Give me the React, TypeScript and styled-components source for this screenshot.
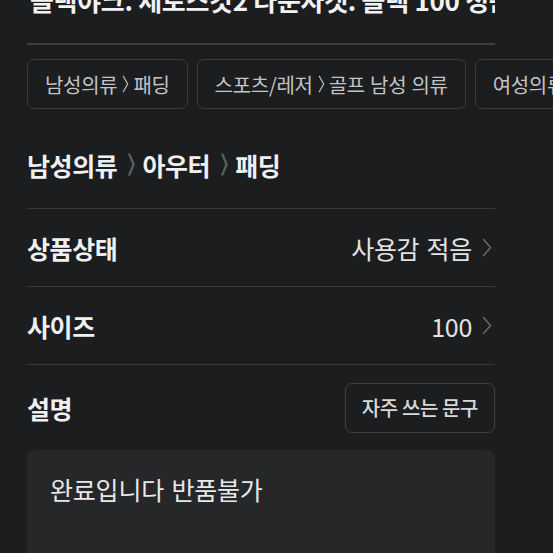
import styled, { createGlobalStyle } from "styled-components";

const GlobalStyle = createGlobalStyle`
  html, body {
    margin: 0;
    padding: 0;
    background: #1c1d1f;
  }
  * {
    box-sizing: border-box;
  }
`;

const chips = ["남성의류 〉패딩", "스포츠/레저 〉골프 남성 의류", "여성의류 〉패딩"];

const Chevron = ({ w, h, color, stroke }: { w: number; h: number; color: string; stroke: number }) => (
  <svg width={w} height={h} viewBox={`0 0 ${w} ${h}`} fill="none">
    <path
      d={`M${stroke} ${stroke} L${w - stroke} ${h / 2} L${stroke} ${h - stroke}`}
      stroke={color}
      strokeWidth={stroke}
      strokeLinecap="round"
      strokeLinejoin="round"
    />
  </svg>
);

const App = () => {
  return (
    <Page>
      <GlobalStyle />
      <Content>
        <TitleBlock>
          <Title>블랙야크. 세로스킷2 다운자켓. 블랙 100 정품</Title>
        </TitleBlock>
        <ChipRow>
          {chips.map((c) => {
            const [a, b] = c.split(" 〉");
            return (
              <Chip key={c}>
                {a}
                <ChipSep>
                  <Chevron w={7} h={18} color="#b9b9bb" stroke={1.3} />
                </ChipSep>
                {b}
              </Chip>
            );
          })}
        </ChipRow>
        <Breadcrumb>
          남성의류
          <CrumbSep>
            <Chevron w={9} h={25} color="#5b5c5f" stroke={2.4} />
          </CrumbSep>
          아우터
          <CrumbSep>
            <Chevron w={9} h={25} color="#5b5c5f" stroke={2.4} />
          </CrumbSep>
          패딩
        </Breadcrumb>
        <Row>
          <Label>상품상태</Label>
          <Value>
            사용감 적음
            <Chevron w={10} h={19} color="#707073" stroke={1.4} />
          </Value>
        </Row>
        <Row>
          <Label>사이즈</Label>
          <Value>
            100
            <Chevron w={10} h={19} color="#707073" stroke={1.4} />
          </Value>
        </Row>
        <DescRow>
          <Label>설명</Label>
          <PhraseButton>자주 쓰는 문구</PhraseButton>
        </DescRow>
        <TextBox>완료입니다 반품불가</TextBox>
      </Content>
    </Page>
  );
};

const Page = styled.div`
  width: 553px;
  height: 553px;
  overflow: hidden;
  background: #1c1d1f;
  font-family: "Noto Sans CJK KR", "Noto Sans", sans-serif;
  color: #ececee;
`;

const Content = styled.div`
  padding: 0 58px 0 27px;
`;

const TitleBlock = styled.div`
  height: 45px;
  border-bottom: 2px solid #3d3e41;
  overflow: hidden;
`;

const Title = styled.h1`
  margin: -19px 0 0 3px;
  font-size: 26px;
  font-weight: 700;
  white-space: nowrap;
  letter-spacing: -0.3px;
  color: #f2f2f4;
`;

const ChipRow = styled.div`
  display: flex;
  gap: 9px;
  padding-top: 14px;
  margin-right: -58px;
  overflow: hidden;
`;

const Chip = styled.div`
  flex-shrink: 0;
  display: flex;
  align-items: center;
  height: 50px;
  padding: 0 17px;
  border: 1px solid #3a3b3e;
  border-radius: 7px;
  font-size: 20px;
  color: #c4c4c6;
  white-space: nowrap;
  letter-spacing: -0.3px;
  word-spacing: 1px;
`;

const ChipSep = styled.span`
  display: inline-flex;
  margin: 0 4px 0 5px;
`;

const Breadcrumb = styled.div`
  display: flex;
  align-items: center;
  height: 100px;
  padding-top: 12px;
  border-bottom: 1px solid #38393c;
  font-size: 25px;
  font-weight: 700;
  color: #f0f0f2;
  letter-spacing: -0.4px;
`;

const CrumbSep = styled.span`
  display: inline-flex;
  margin: 0 6px 0 10px;
`;

const Row = styled.div`
  display: flex;
  align-items: center;
  justify-content: space-between;
  height: 78px;
  border-bottom: 1px solid #38393c;
  &:nth-of-type(2) {
    border-bottom-width: 2px;
  }
`;

const Label = styled.div`
  font-size: 25px;
  font-weight: 700;
  color: #f0f0f2;
  letter-spacing: -0.4px;
`;

const Value = styled.div`
  display: flex;
  align-items: center;
  gap: 10px;
  font-size: 25px;
  color: #e2e2e4;
  padding-right: 3px;
  letter-spacing: -0.3px;
  word-spacing: 2px;
`;

const DescRow = styled.div`
  display: flex;
  align-items: center;
  justify-content: space-between;
  height: 85px;
`;

const PhraseButton = styled.button`
  height: 50px;
  padding: 0 16px;
  background: transparent;
  border: 1px solid #3d3e41;
  border-radius: 7px;
  font-family: inherit;
  font-size: 20px;
  font-weight: 500;
  color: #d8d8da;
  letter-spacing: -0.4px;
`;

const TextBox = styled.div`
  height: 140px;
  padding: 21px 23px;
  background: #262729;
  border-radius: 8px;
  font-size: 25px;
  color: #e8e8ea;
  letter-spacing: -0.2px;
  word-spacing: 2px;
`;

export default App;
